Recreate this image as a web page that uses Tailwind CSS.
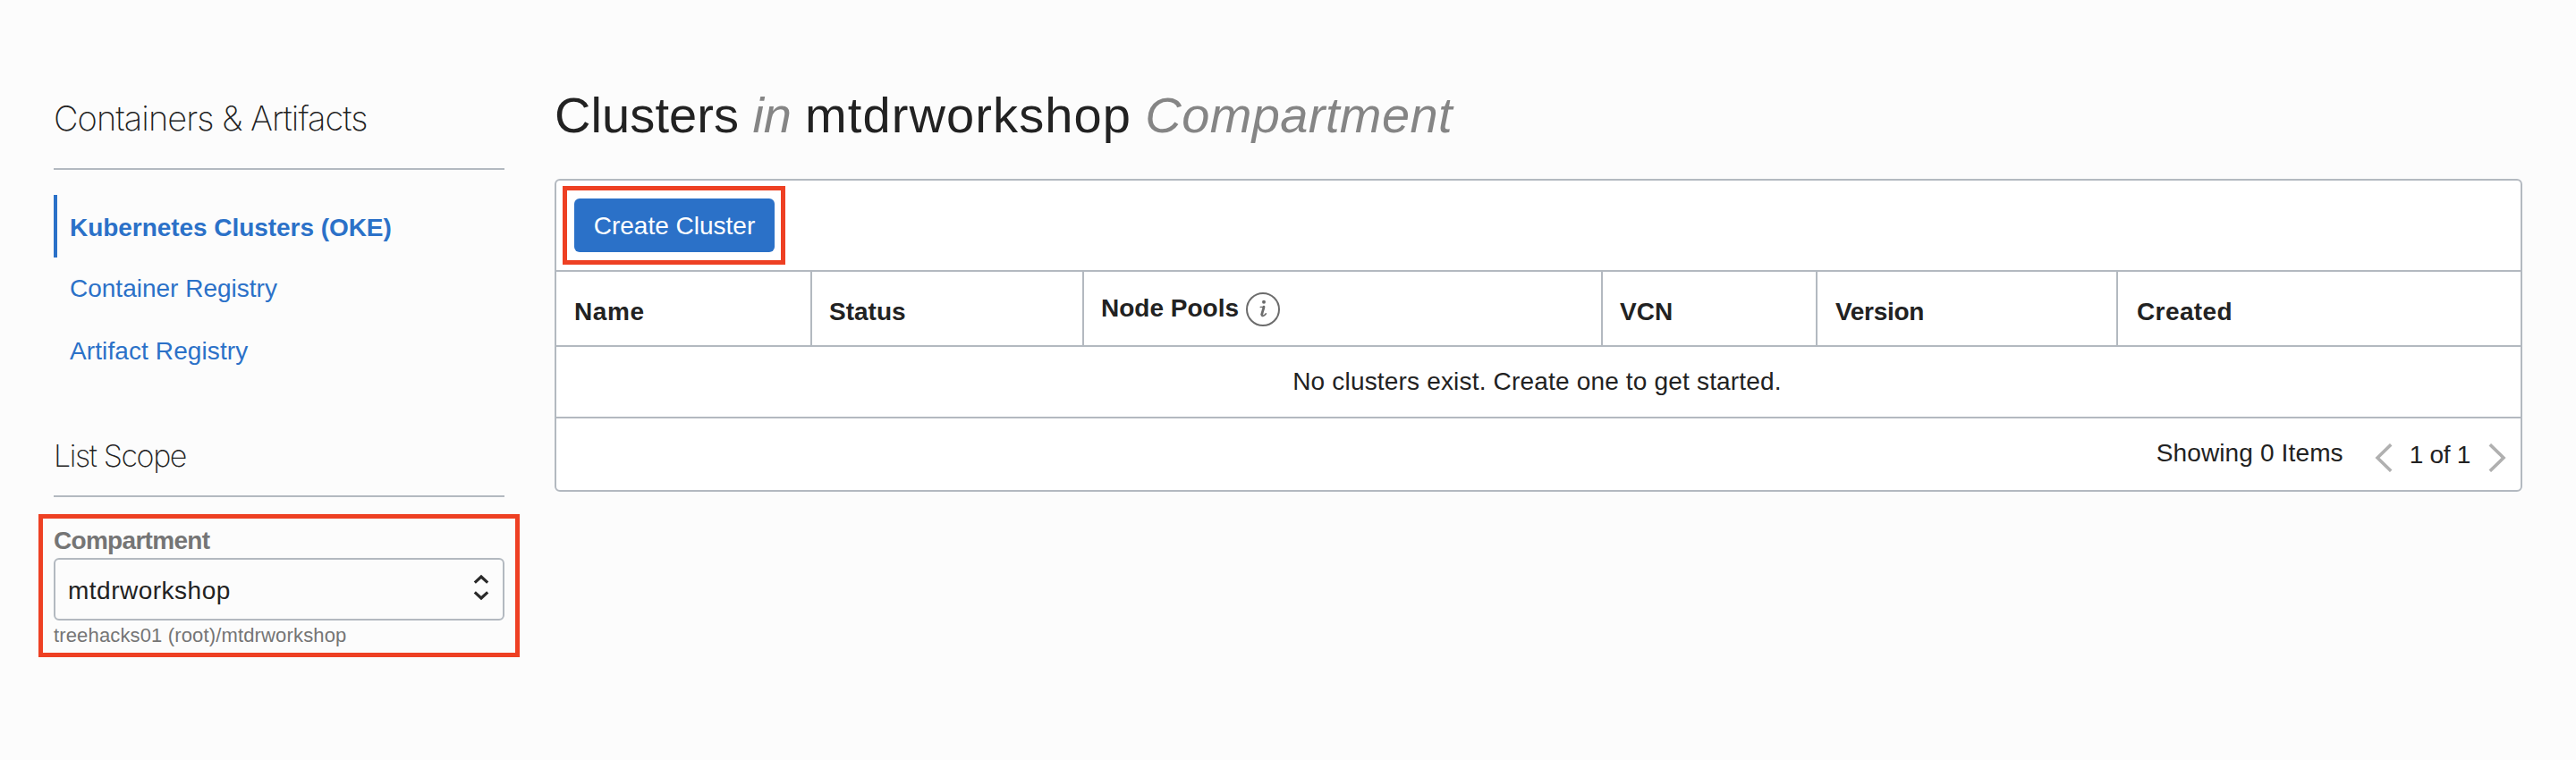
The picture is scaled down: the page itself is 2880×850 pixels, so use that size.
<!DOCTYPE html>
<html lang="en">
<head>
<meta charset="utf-8">
<title>Clusters</title>
<script src="https://cdn.jsdelivr.net/npm/@tailwindcss/browser@4"></script>
</head>
<body class="flex h-[850px] w-[2880px] overflow-hidden bg-[#fcfcfc] font-['Liberation_Sans',Arial,sans-serif] text-[28px] text-[#222222]">
  <aside class="ml-[60px] w-[504px] shrink-0 pt-[108px]">
    <h2 class="border-b-2 border-[#b3b9c0] pb-8 font-['Inter',sans-serif] text-[38px] leading-[48px] font-extralight tracking-[-0.95px] whitespace-nowrap">Containers &amp; Artifacts</h2>
    <nav class="mt-7 flex flex-col text-[#2b71c8]">
      <a class="flex h-[70px] items-center border-l-4 border-[#2b71c8] pt-[3px] pl-3.5 font-bold tracking-[-0.05px]">Kubernetes Clusters (OKE)</a>
      <a class="flex h-[69px] items-center pl-[18px]">Container Registry</a>
      <a class="flex h-[70px] items-center pt-0.5 pl-[18px] tracking-[0.1px]">Artifact Registry</a>
    </nav>
    <h3 class="mt-[61px] border-b-2 border-[#b3b9c0] pb-[22px] font-['Inter',sans-serif] text-[34px] leading-[44px] font-extralight tracking-[-1.4px]">List Scope</h3>
    <section class="relative mt-[31px]">
      <div class="absolute -top-3 -left-[17px] h-40 w-[538px] border-5 border-[#ee4023]"></div>
      <label class="block pt-px leading-[34px] font-bold tracking-[-0.7px] text-[#757575]">Compartment</label>
      <div class="mt-0.5 flex h-[70px] items-center justify-between rounded-md border-2 border-[#b3b9c0] pr-[15px] pl-[14px]">
        <span class="pt-[3px] tracking-[0.5px]">mtdrworkshop</span>
        <svg class="mb-0.5 h-8 w-[18px]" viewBox="0 0 18 32" fill="none" stroke="#2a2a2a" stroke-width="3.2"><path d="M1.8 9.6 9 3l7.2 6.6M1.8 20.4 9 27l7.2-6.6"/></svg>
      </div>
      <p class="mt-[3px] text-[22px] leading-7 tracking-[0.15px] text-[#757575]">treehacks01 (root)/mtdrworkshop</p>
    </section>
  </aside>

  <main class="ml-14 w-[2200px] shrink-0 pt-[97px]">
    <h1 class="text-[56px] leading-[64px] tracking-[-0.2px] whitespace-nowrap"><span class="tracking-[0.1px]">Clusters</span> <em class="text-[#858585]">in</em> <span class="tracking-[1.1px]">mtdrworkshop</span> <em class="tracking-[0.4px] text-[#858585]">Compartment</em></h1>
    <div class="mt-[39px] h-[350px] rounded-md border-2 border-[#b3b9c0] bg-white">
      <div class="flex h-[102px] border-b-2 border-[#b3b9c0] p-5">
        <div class="relative h-[60px] w-56">
          <div class="absolute -top-[14px] -left-[13px] h-[88px] w-[249px] border-5 border-[#ee4023]"></div>
          <button class="h-[60px] w-56 rounded-md bg-[#2b71c8] pt-0.5 text-white">Create Cluster</button>
        </div>
      </div>
      <div class="grid h-[84px] grid-cols-[286px_304px_580px_240px_336px_1fr] border-b-2 border-[#b3b9c0] font-bold">
        <div class="flex items-center border-r-2 border-[#b3b9c0] pt-2 pl-5 tracking-[0.6px]">Name</div>
        <div class="flex items-center border-r-2 border-[#b3b9c0] pt-2 pl-[19px]">Status</div>
        <div class="flex items-center border-r-2 border-[#b3b9c0] pl-[19px]">Node Pools
          <svg class="mt-0.5 ml-[7px] h-10 w-10" viewBox="0 0 40 40" fill="none" stroke="#6c6c6c" stroke-linecap="round"><circle cx="20" cy="20" r="18" stroke-width="2"/><circle cx="21" cy="11.8" r="2" fill="#6c6c6c" stroke="none"/><path d="M17.2 17.4h3.4" stroke-width="1.4"/><path d="M21 17.2c-.5 3.2-1.8 5.6-2.2 8.4" stroke-width="2.8"/><path d="M18.4 25.6c-.1 2.8 3 2.2 5-.8" stroke-width="1.6"/></svg>
        </div>
        <div class="flex items-center border-r-2 border-[#b3b9c0] pt-2 pl-[19px]">VCN</div>
        <div class="flex items-center border-r-2 border-[#b3b9c0] pt-2 pl-5 tracking-[-0.3px]">Version</div>
        <div class="flex items-center pt-2 pl-[21px] tracking-[0.4px]">Created</div>
      </div>
      <div class="flex h-20 items-center justify-center border-b-2 border-[#b3b9c0] pr-[3px] pb-px tracking-[0.18px]">No clusters exist. Create one to get started.</div>
      <div class="flex h-20 items-center justify-end pr-[16px]">
        <span class="pb-[3px] tracking-[0.14px]">Showing 0 Items</span>
        <svg class="mt-2 ml-[35px] h-8 w-5" viewBox="0 0 20 32" fill="none" stroke="#b0b0b0" stroke-width="3.6"><path d="M18.2 1.2 3 16l15.2 14.8"/></svg>
        <span class="mr-5 ml-[19px] pt-0.5 tracking-[-0.3px]">1 of 1</span>
        <svg class="mt-2 h-8 w-5" viewBox="0 0 20 32" fill="none" stroke="#b0b0b0" stroke-width="3.6"><path d="M1.8 1.2 17 16 1.8 30.8"/></svg>
      </div>
    </div>
  </main>
</body>
</html>
